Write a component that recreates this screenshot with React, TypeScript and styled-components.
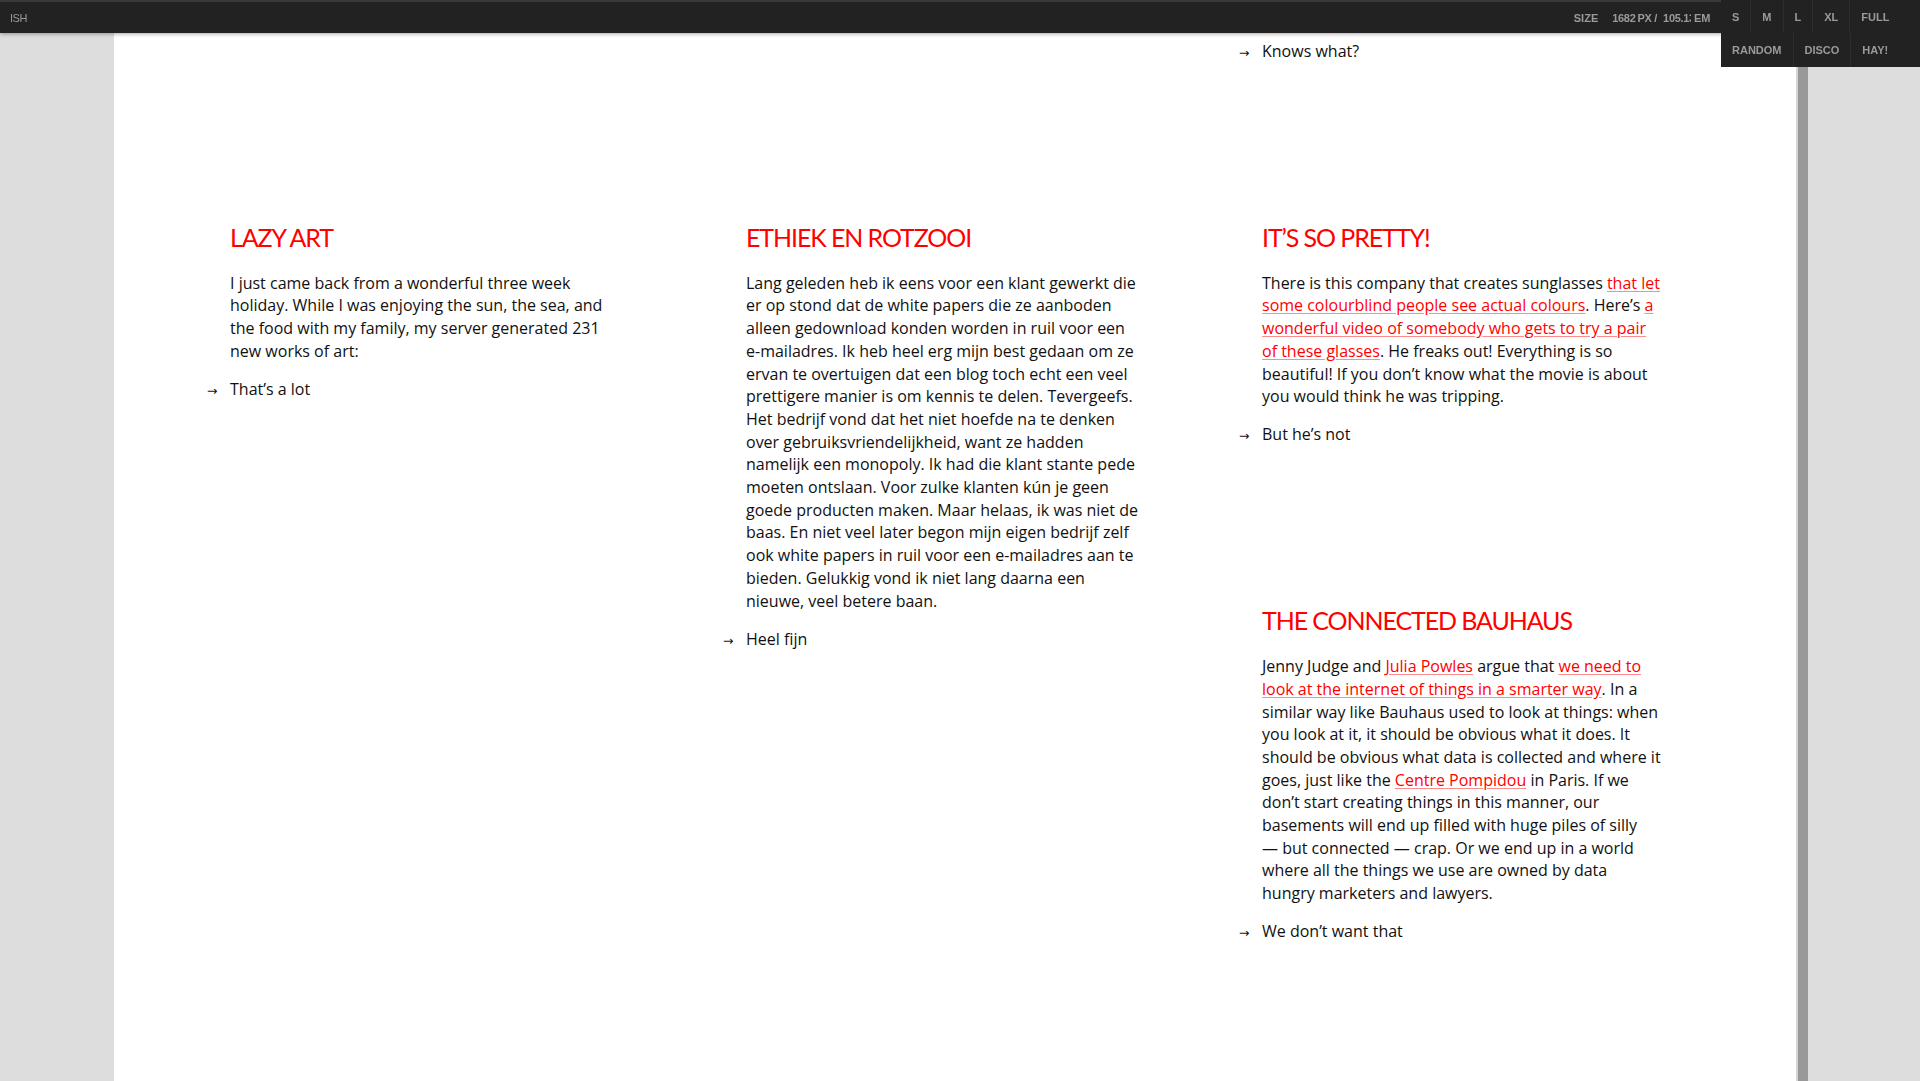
import styled, { createGlobalStyle } from "styled-components";

function App() {
  return (
    <>
      <GlobalStyle />
      <Frame>
        <Gutter />
        <Viewport>
          <Columns>
            <Tail $col={3}>
              <Bullet>Knows what?</Bullet>
            </Tail>
            {COLUMNS.map((column, i) => (
              <Stack key={i}>
                {column.map((post) => (
                  <Article key={post.title}>
                    <Title>{post.title}</Title>
                    <Body>{post.body}</Body>
                    <Bullet>{post.bullet}</Bullet>
                  </Article>
                ))}
              </Stack>
            ))}
          </Columns>
        </Viewport>
        <Edge />
        <Handle />
        <Gutter $grow />
      </Frame>
      <Toolbar>
        <Logo>ISH</Logo>
        <Controls>
          <SizeLabel>SIZE</SizeLabel>
          <SizeValue>
            1682<Unit>PX /</Unit>
            <Clip>105.13</Clip>EM
          </SizeValue>
          <Menu>
            <MenuRow>
              {SIZES.map((s) => (
                <MenuButton key={s}>{s}</MenuButton>
              ))}
            </MenuRow>
            <MenuRow>
              {EXTRAS.map((s) => (
                <MenuButton key={s}>{s}</MenuButton>
              ))}
            </MenuRow>
          </Menu>
        </Controls>
      </Toolbar>
    </>
  );
}

export default App;

// lines are broken where the reference breaks them
const lines = (text: string[]) =>
  text.map((line, i) => (
    <span key={i}>
      {i > 0 && <br />}
      {line}
    </span>
  ));

const GlobalStyle = createGlobalStyle`
  html, body {
    margin: 0;
    padding: 0;
    overflow: hidden;
    background: #dddddd;
  }
`;

const Frame = styled.div`
  display: flex;
  height: 1081px;
  background: #dddddd;
`;

const Gutter = styled.div<{ $grow?: boolean }>`
  width: 114px;
  flex: ${(p) => (p.$grow ? "1" : "0 0 114px")};
  background: #dddddd;
`;

const Viewport = styled.div`
  flex: 0 0 1682px;
  background: #ffffff;
  overflow: hidden;
  font-family: "Open Sans", Lato, sans-serif;
  color: #111111;
`;

const Edge = styled.div`
  flex: 0 0 2px;
  background: #d4d4d4;
`;

const Handle = styled.div`
  flex: 0 0 10px;
  background: #999999;
`;

const Columns = styled.div`
  display: grid;
  grid-template-columns: repeat(3, 400px);
  column-gap: 116px;
  padding: 40px 0 0 116px;
  align-items: start;
`;

const Stack = styled.div`
  display: flex;
  flex-direction: column;
`;

const Article = styled.article`
  margin-bottom: 157px;
`;

const Tail = styled(Article)<{ $col: number }>`
  grid-column: ${(p) => p.$col};
`;

const Title = styled.h2`
  margin: 0 0 20px;
  font-family: Lato, sans-serif;
  font-weight: 400;
  font-size: 25px;
  line-height: 30px;
  letter-spacing: -1.1px;
  color: #ff0000;
  text-transform: uppercase;
`;

const Body = styled.p`
  margin: 0 0 15.5px;
  font-size: 16px;
  line-height: 22.7px;
  white-space: nowrap;
`;

const Link = styled.a`
  color: #ff0000;
  text-decoration: underline;
  text-decoration-color: rgba(255, 0, 0, 0.45);
  text-underline-offset: 2px;
`;

const Bullet = styled.div`
  display: flex;
  align-items: baseline;
  margin-left: -23px;
  font-size: 16px;
  line-height: 22.7px;

  &::before {
    content: "→";
    flex: 0 0 23px;
    font-family: "DejaVu Sans", sans-serif;
    font-size: 12.5px;
  }
`;

const Toolbar = styled.header`
  position: fixed;
  top: 0;
  left: 0;
  right: 0;
  height: 33px;
  display: flex;
  align-items: center;
  justify-content: space-between;
  background: #222222;
  border-top: 2px solid #3a3a3a;
  box-sizing: border-box;
  box-shadow: 0 1px 4px rgba(0, 0, 0, 0.35);
  font-family: "Liberation Sans", Arial, sans-serif;
  font-size: 11px;
  font-weight: 700;
  color: #9a9a9a;
`;

const Logo = styled.div`
  padding-left: 10px;
  font-weight: 400;
  letter-spacing: -0.5px;
`;

const Controls = styled.div`
  display: flex;
  align-items: center;
  height: 100%;
`;

const SizeLabel = styled.span`
  margin-right: 14px;
`;

const SizeValue = styled.span`
  display: flex;
  align-items: center;
  margin-right: 11px;
  letter-spacing: -0.3px;
`;

const Unit = styled.span`
  margin-left: 2px;
`;

// the em field is too narrow for its value, so the last digit is cut off
const Clip = styled.span`
  display: inline-block;
  width: 28px;
  overflow: hidden;
  white-space: nowrap;
  margin-left: 6px;
  margin-right: 3px;
`;

const Menu = styled.div`
  position: relative;
  align-self: flex-start;
  margin-top: -2px;
  width: 199px;
  height: 33px;
`;

const MenuRow = styled.div`
  display: flex;
  height: 33px;
  background: #222222;

  & + & {
    position: absolute;
    top: 33px;
    left: 0;
    right: 0;
    height: 34px;
  }
`;

const MenuButton = styled.div`
  display: flex;
  align-items: center;
  padding: 0 11px;
  border-right: 1px solid #2e2e2e;
  &:last-child {
    border-right: none;
  }
`;

const SIZES = ["S", "M", "L", "XL", "FULL"];
const EXTRAS = ["RANDOM", "DISCO", "HAY!"];

interface postType {
  title: string;
  body: React.ReactNode;
  bullet: string;
}

const COLUMNS: postType[][] = [
  [
    {
      title: "Lazy art",
      body: lines([
        "I just came back from a wonderful three week",
        "holiday. While I was enjoying the sun, the sea, and",
        "the food with my family, my server generated 231",
        "new works of art:",
      ]),
      bullet: "That’s a lot",
    },
  ],
  [
    {
      title: "Ethiek en rotzooi",
      body: lines([
        "Lang geleden heb ik eens voor een klant gewerkt die",
        "er op stond dat de white papers die ze aanboden",
        "alleen gedownload konden worden in ruil voor een",
        "e-mailadres. Ik heb heel erg mijn best gedaan om ze",
        "ervan te overtuigen dat een blog toch echt een veel",
        "prettigere manier is om kennis te delen. Tevergeefs.",
        "Het bedrijf vond dat het niet hoefde na te denken",
        "over gebruiksvriendelijkheid, want ze hadden",
        "namelijk een monopoly. Ik had die klant stante pede",
        "moeten ontslaan. Voor zulke klanten kún je geen",
        "goede producten maken. Maar helaas, ik was niet de",
        "baas. En niet veel later begon mijn eigen bedrijf zelf",
        "ook white papers in ruil voor een e-mailadres aan te",
        "bieden. Gelukkig vond ik niet lang daarna een",
        "nieuwe, veel betere baan.",
      ]),
      bullet: "Heel fijn",
    },
  ],
  [
    {
      title: "It’s so pretty!",
      body: (
        <>
          There is this company that creates sunglasses{" "}
          <Link href="#">
            that let
            <br />
            some colourblind people see actual colours
          </Link>
          . Here’s{" "}
          <Link href="#">
            a<br />
            wonderful video of somebody who gets to try a pair
            <br />
            of these glasses
          </Link>
          . He freaks out! Everything is so
          <br />
          beautiful! If you don’t know what the movie is about
          <br />
          you would think he was tripping.
        </>
      ),
      bullet: "But he’s not",
    },
    {
      title: "The connected Bauhaus",
      body: (
        <>
          Jenny Judge and <Link href="#">Julia Powles</Link> argue that{" "}
          <Link href="#">
            we need to
            <br />
            look at the internet of things in a smarter way
          </Link>
          . In a
          <br />
          similar way like Bauhaus used to look at things: when
          <br />
          you look at it, it should be obvious what it does. It
          <br />
          should be obvious what data is collected and where it
          <br />
          goes, just like the <Link href="#">Centre Pompidou</Link> in Paris. If we
          <br />
          don’t start creating things in this manner, our
          <br />
          basements will end up filled with huge piles of silly
          <br />— but connected — crap. Or we end up in a world
          <br />
          where all the things we use are owned by data
          <br />
          hungry marketers and lawyers.
        </>
      ),
      bullet: "We don’t want that",
    },
  ],
];
